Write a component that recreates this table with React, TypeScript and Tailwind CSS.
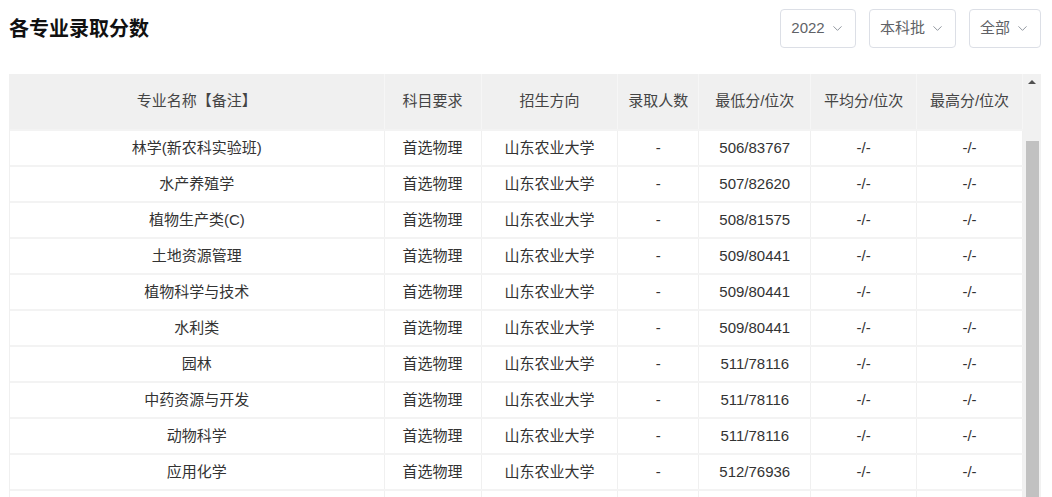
import { ChevronDown } from 'lucide-react';

const font = { fontFamily: '"Liberation Sans", "Noto Sans CJK SC", sans-serif' };

const rows = [
  ['林学(新农科实验班)', '506/83767'],
  ['水产养殖学', '507/82620'],
  ['植物生产类(C)', '508/81575'],
  ['土地资源管理', '509/80441'],
  ['植物科学与技术', '509/80441'],
  ['水利类', '509/80441'],
  ['园林', '511/78116'],
  ['中药资源与开发', '511/78116'],
  ['动物科学', '511/78116'],
  ['应用化学', '512/76936'],
];

const cols = ['w-[375px]', 'w-[97px]', 'w-[137px]', 'w-[81px]', 'w-[112px]', 'w-[106px]', 'w-[106px]'];
const heads = ['专业名称【备注】', '科目要求', '招生方向', '录取人数', '最低分/位次', '平均分/位次', '最高分/位次'];

const Select = ({ label, w }: { label: string; w: string }) => (
  <div
    className={`flex h-[39px] ${w} items-center justify-center gap-[5px] rounded-[4px] border border-[#dcdfe6] text-[15px] text-[#606266]`}
  >
    <span>{label}</span>
    <ChevronDown size={15} strokeWidth={1.5} className="text-[#8a8f99]" />
  </div>
);

export default function App() {
  return (
    <div className="h-[497px] overflow-hidden bg-white pl-[9px] pr-[11px]" style={font}>
      <div className="flex h-[74px] items-start justify-between pt-[9px]">
        <h1 className="mt-[7px] text-[20px] font-bold leading-[26px] text-[#111]">各专业录取分数</h1>
        <div className="flex gap-[13px]">
          <Select label="2022" w="w-[76px]" />
          <Select label="本科批" w="w-[87px]" />
          <Select label="全部" w="w-[72px]" />
        </div>
      </div>

      <div className="flex">
        <div className="w-[1014px] border-l border-[#f0f0f0] text-[15px] text-[#333]">
          <div className="flex h-[57px] border-b-2 border-[#f3f3f3] bg-[#f0f0f0]">
            {heads.map((h, i) => (
              <div
                key={h}
                className={`${cols[i]} flex items-center justify-center border-r border-[#f6f6f6] text-[#444]`}
              >
                {h}
              </div>
            ))}
          </div>
          {rows.map(([name, low]) => (
            <div key={name} className="flex h-[36px] border-b-2 border-[#f3f3f3]">
              {[name, '首选物理', '山东农业大学', '-', low, '-/-', '-/-'].map((c, i) => (
                <div
                  key={i}
                  className={`${cols[i]} flex items-center justify-center border-r border-[#f0f0f0]`}
                >
                  {c}
                </div>
              ))}
            </div>
          ))}
          {/* next row, scrolled below the fold */}
          <div className="flex h-[36px]">
            {cols.map((w, i) => (
              <div key={i} className={`${w} border-r border-[#f0f0f0]`} />
            ))}
          </div>
        </div>

        <div className="flex w-[18px] flex-col items-center bg-[#f1f1f1]">
          <div className="mt-[6px] h-0 w-0 border-x-[4px] border-b-[4px] border-x-transparent border-b-[#505050]" />
          <div className="mt-[57px] h-[400px] w-[13px] bg-[#c1c1c1]" />
        </div>
      </div>
    </div>
  );
}
